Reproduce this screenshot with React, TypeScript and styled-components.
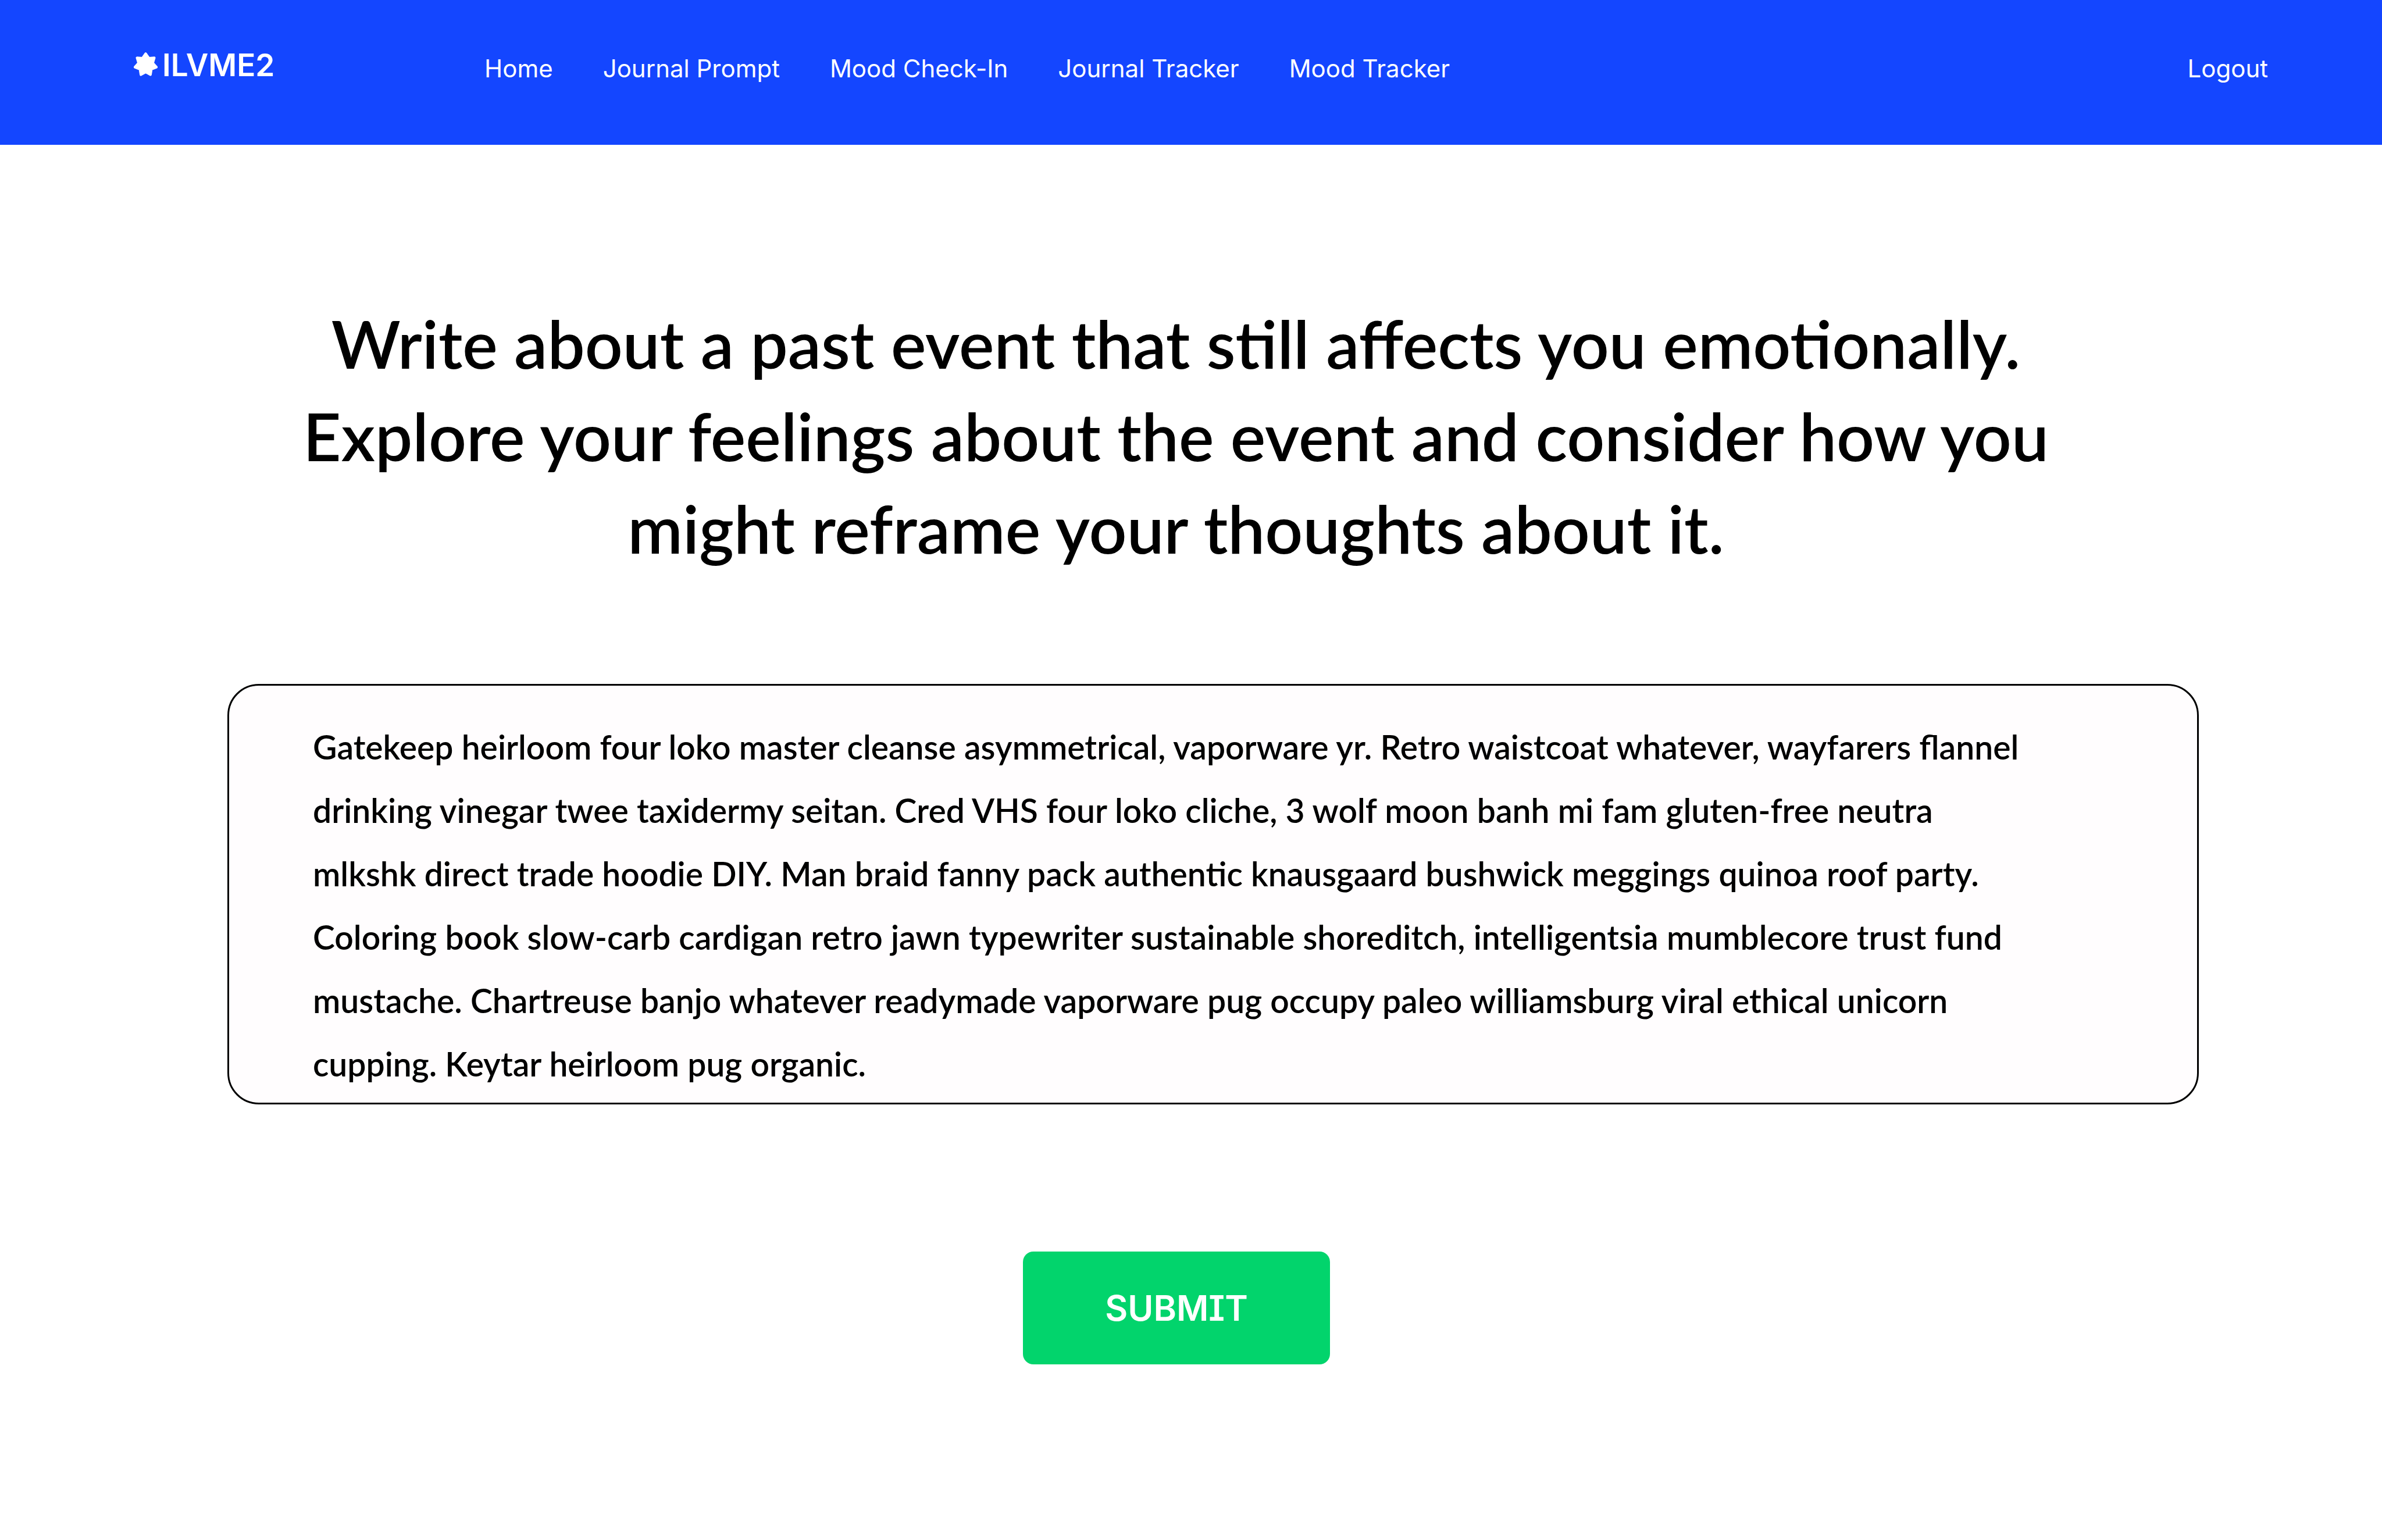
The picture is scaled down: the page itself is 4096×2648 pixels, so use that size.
import React from "react";
import styled, { createGlobalStyle } from "styled-components";

const GlobalStyle = createGlobalStyle`
  *, *::before, *::after { box-sizing: border-box; }
  body {
    margin: 0;
    background: #ffffff;
    color: #000000;
    font-family: Inter, "Liberation Sans", sans-serif;
  }
`;

const Page = styled.div`
  min-height: 100vh;
  display: flex;
  flex-direction: column;
`;

const Header = styled.header`
  display: flex;
  align-items: flex-start;
  min-height: 249px;
  padding: 88px 196px 0 230px;
  background: #1446ff;
`;

const Brand = styled.a`
  display: flex;
  align-items: center;
  gap: 8px;
  width: 603px;
  color: #ffffff;
  font-size: 53px;
  font-weight: 600;
  line-height: 48px;
  text-decoration: none;
`;

const Star = styled.svg`
  width: 41px;
  height: 44px;
`;

const Nav = styled.nav`
  display: flex;
  flex: 1;
  gap: 86px;
`;

const NavLink = styled.a`
  color: #ffffff;
  font-size: 42px;
  font-weight: 400;
  line-height: 60px;
  text-decoration: none;
  white-space: nowrap;
`;

const Main = styled.main`
  display: flex;
  flex-direction: column;
`;

const Form = styled.form`
  display: flex;
  flex-direction: column;
`;

const Prompt = styled.label`
  align-self: center;
  max-width: 3100px;
  margin: 261px 52px 0 0;
  font-family: Lato, sans-serif;
  font-size: 114px;
  font-weight: 600;
  line-height: 159px;
  text-align: center;
`;

const Entry = styled.textarea`
  display: block;
  height: 723px;
  margin: 189px 315px 0 391px;
  padding: 51px 290px 0 144px;
  border: 3px solid #000000;
  border-radius: 54px;
  outline: none;
  resize: none;
  overflow: hidden;
  background: #fffdfe;
  color: #000000;
  font-family: Lato, sans-serif;
  font-size: 57px;
  font-weight: 600;
  line-height: 109px;
`;

const Submit = styled.button`
  align-self: center;
  width: 528px;
  height: 194px;
  margin: 253px 50px 0 0;
  padding: 0;
  border: 0;
  border-radius: 18px;
  background: #02d46c;
  color: #ffffff;
  font-family: Inter, sans-serif;
  font-feature-settings: "ss02" 1, "cv08" 1;
  font-size: 60px;
  font-weight: 600;
  line-height: 80px;
`;

const LINKS = ["Home", "Journal Prompt", "Mood Check-In", "Journal Tracker", "Mood Tracker"];

const ENTRY_TEXT =
  "Gatekeep heirloom four loko master cleanse asymmetrical, vaporware yr. Retro waistcoat whatever, wayfarers flannel drinking vinegar twee taxidermy seitan. Cred VHS four loko cliche, 3 wolf moon banh mi fam gluten-free neutra mlkshk direct trade hoodie DIY. Man braid fanny pack authentic knausgaard bushwick meggings quinoa roof party. Coloring book slow-carb cardigan retro jawn typewriter sustainable shoreditch, intelligentsia mumblecore trust fund mustache. Chartreuse banjo whatever readymade vaporware pug occupy paleo williamsburg viral ethical unicorn cupping. Keytar heirloom pug organic.";

// Seven-pointed star: outer and inner vertices alternate around the centre.
const STAR_POINTS = Array.from({ length: 14 }, (_, i) => {
  const radius = i % 2 === 0 ? 67 : 44;
  const angle = (i * Math.PI) / 7;
  return `${(72 + radius * Math.sin(angle)).toFixed(1)},${(75 - radius * Math.cos(angle)).toFixed(1)}`;
}).join(" ");

export default function App() {
  return (
    <Page>
      <GlobalStyle />
      <Header>
        <Brand href="#home">
          <Star viewBox="0 0 144 155" aria-hidden="true">
            <polygon
              points={STAR_POINTS}
              fill="#ffffff"
              stroke="#ffffff"
              strokeWidth="15"
              strokeLinejoin="round"
            />
          </Star>
          ILVME2
        </Brand>
        <Nav>
          {LINKS.map((label) => (
            <NavLink key={label} href="#">
              {label}
            </NavLink>
          ))}
        </Nav>
        <NavLink href="#logout">Logout</NavLink>
      </Header>
      <Main>
        <Form onSubmit={(event) => event.preventDefault()}>
          <Prompt htmlFor="entry">
            Write about a past event that still affects you emotionally. Explore your feelings about
            the event and consider how you might reframe your thoughts about it.
          </Prompt>
          <Entry id="entry" defaultValue={ENTRY_TEXT} spellCheck={false} />
          <Submit type="submit">SUBMIT</Submit>
        </Form>
      </Main>
    </Page>
  );
}
